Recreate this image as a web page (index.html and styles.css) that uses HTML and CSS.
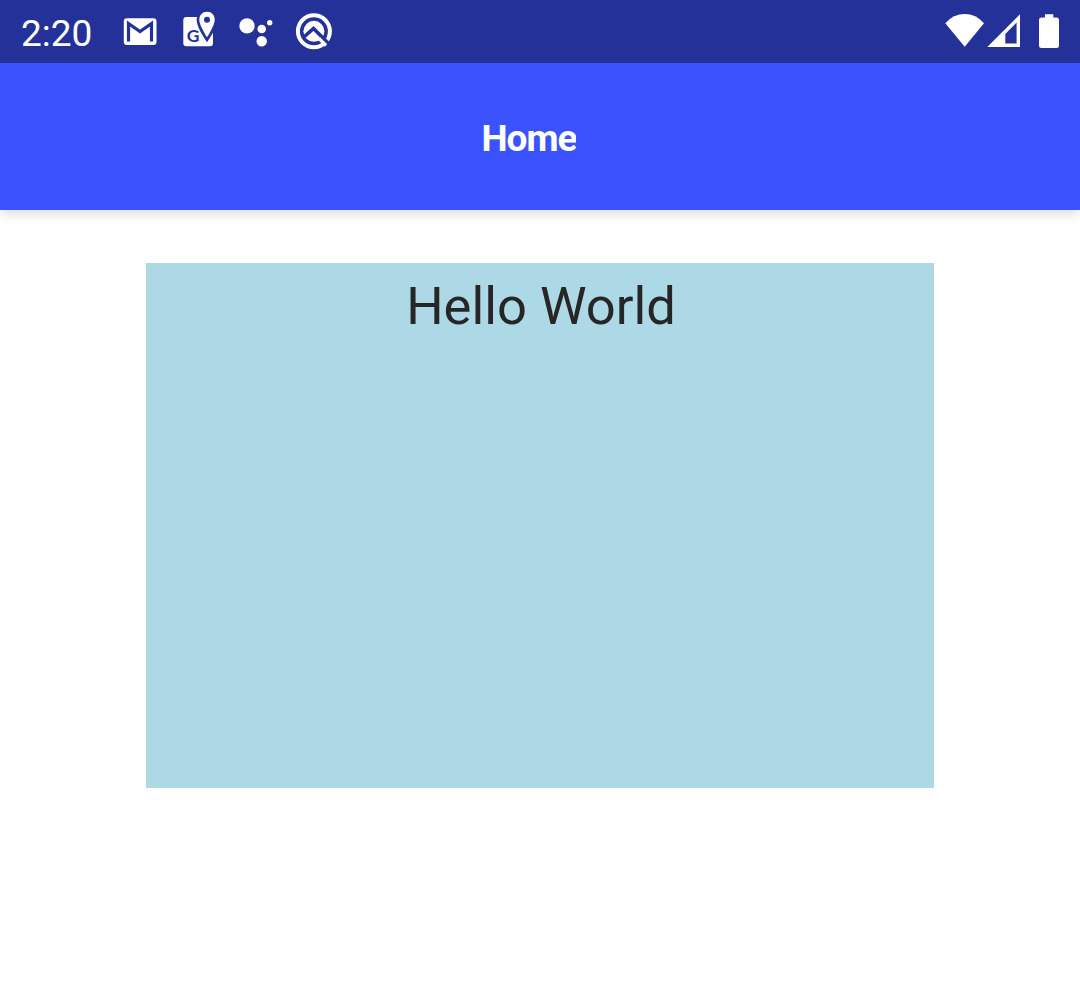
FILE: index.html
```html
<!DOCTYPE html>
<html lang="en">
<head>
<meta charset="utf-8">
<title>Home</title>
<link rel="stylesheet" href="styles.css">
</head>
<body>
<div class="status">
  <span class="time">2:20</span>
  <div class="notifications">
    <svg width="40" height="41" viewBox="120 11 40 41"><rect x="123.8" y="18.3" width="32.7" height="26.8" rx="3" fill="#fff"/><path d="M128.5 41.5V23.5L140 31.5L151.5 23.5V41.5" fill="none" stroke="#233198" stroke-width="3.2"/></svg>
    <svg width="40" height="41" viewBox="178 11 40 41"><rect x="183.3" y="17" width="29.7" height="29.3" rx="3" fill="#fff"/><path d="M207 11.7C202.4 11.7 199.3 15.2 199.3 19.7C199.3 25.5 207 37.3 207 37.3S214.7 25.5 214.7 19.7C214.7 15.2 211.6 11.7 207 11.7Z" fill="#fff" stroke="#233198" stroke-width="5.4" paint-order="stroke"/><circle cx="207" cy="19.7" r="3" fill="#233198"/><text class="maps-letter" x="193" y="42.2" text-anchor="middle">G</text></svg>
    <svg width="40" height="41" viewBox="236 11 40 41" fill="#fff"><circle cx="247" cy="25.9" r="7.7"/><circle cx="261.7" cy="29" r="4.3"/><circle cx="269.7" cy="22.7" r="2.7"/><circle cx="261.7" cy="41.3" r="5.2"/></svg>
    <svg width="40" height="41" viewBox="294 11 40 41"><circle cx="313.9" cy="31.3" r="16" fill="none" stroke="#fff" stroke-width="4"/><circle cx="313.9" cy="31.3" r="10.5" fill="#fff"/><path d="M304.5 36.5L313.5 28.5L331 46" fill="none" stroke="#233198" stroke-width="3.6"/><path d="M319 38.5L326 45.5" fill="none" stroke="#fff" stroke-width="3.2"/></svg>
  </div>
  <div class="system">
    <svg width="40" height="41" viewBox="945 11 40 41"><path d="M945.3 23.2Q953.5 14 964.7 14T984 23.2L964.7 46.7Z" fill="#fff"/></svg>
    <svg width="34" height="41" viewBox="987 11 34 41"><path fill="#fff" fill-rule="evenodd" d="M987.3 47L1020 14.3V47ZM1005.3 34V43.5H1016.6V22.5Z"/></svg>
    <svg class="battery" width="20" height="41" viewBox="1039 11 20 41" fill="#fff"><path d="M1045 14.2H1053.3V17.5H1056.5Q1059 17.5 1059 20V45.5Q1059 48 1056.5 48H1041.5Q1039 48 1039 45.5V20Q1039 17.5 1041.5 17.5H1045Z"/></svg>
  </div>
</div>
<header class="header"><h1 class="title">Home</h1></header>
<main class="content"><div class="box">Hello World</div></main>
</body>
</html>
```
FILE: styles.css
```css
body {
  margin: 0;
  min-height: 1000px;
  background: #fff;
  font-family: Roboto, sans-serif;
}
.status {
  position: relative;
  z-index: 1;
  display: flex;
  align-items: center;
  box-sizing: border-box;
  height: 63px;
  padding: 0 21px;
  background: #233198;
}
.time {
  width: 99px;
  color: #fff;
  font-size: 37px;
  line-height: 43px;
  padding-top: 4px;
}
.notifications {
  display: flex;
  gap: 18px;
}
.maps-letter {
  fill: #233198;
  font-family: Lato, sans-serif;
  font-size: 17.5px;
  font-weight: 700;
}
.system {
  display: flex;
  gap: 2px;
  margin-left: auto;
}
.battery {
  margin-left: 16px;
}
.header {
  display: flex;
  align-items: center;
  justify-content: center;
  height: 147px;
  background: #3b53ff;
  box-shadow: 0 3px 12px rgba(0, 0, 0, 0.16);
}
.title {
  width: 94px;
  margin: 5px 23px 0 0;
  overflow: hidden;
  color: #fff;
  font-size: 37px;
  font-weight: 700;
  line-height: 44px;
  letter-spacing: -1px;
  white-space: nowrap;
}
.content {
  display: flex;
  justify-content: center;
  padding-top: 53px;
}
.box {
  box-sizing: border-box;
  width: 788px;
  height: 525px;
  padding: 12px 0 0 2px;
  background: #add8e6;
  color: #262626;
  font-size: 52.5px;
  line-height: 62px;
  text-align: center;
}
```
